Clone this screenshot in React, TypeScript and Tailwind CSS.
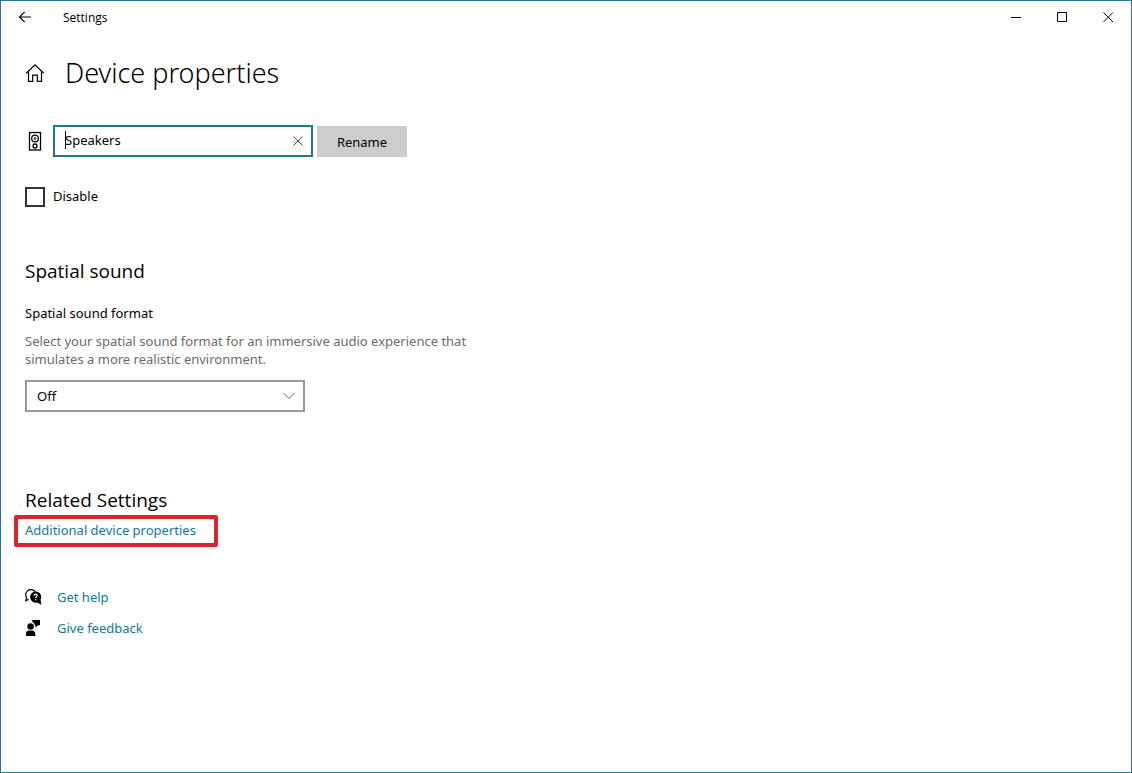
import { useState } from "react";

const windowButtons = [
  { key: "minimize", label: "Minimize", path: "M0 5.5h10" },
  { key: "maximize", label: "Maximize", path: "M0.5 0.5h9v9h-9z" },
  { key: "close", label: "Close", path: "M0.5 0.5l9.5 9.5M10 0.5L0.5 10" },
];

const helpLinks = [
  { key: "help", label: "Get help", icon: HelpIcon },
  { key: "feedback", label: "Give feedback", icon: FeedbackIcon },
];

function BackIcon() {
  return (
    <svg width="14" height="12" viewBox="0 0 14 12" fill="none" stroke="currentColor" strokeWidth="1.2">
      <path d="M1.5 6H13M6.7 0.8L1.5 6l5.2 5.2" />
    </svg>
  );
}

function HomeIcon() {
  return (
    <svg width="20" height="20" viewBox="0 0 20 20" fill="none" stroke="currentColor" strokeWidth="1.2">
      <path d="M1.3 10.3L10 1.8l8.7 8.5" />
      <path d="M3.5 8.5v9.9h4.2v-6.3h4.6v6.3h4.2V8.5" />
    </svg>
  );
}

function SpeakerIcon() {
  return (
    <svg width="20" height="20" viewBox="0 0 20 20" fill="none" stroke="currentColor">
      <rect x="4.5" y="1.5" width="11" height="17.5" strokeWidth="1.3" />
      <circle cx="10" cy="7.5" r="3.3" strokeWidth="1.2" />
      <circle cx="10" cy="7.5" r="1" strokeWidth="0.9" />
      <circle cx="10" cy="15" r="2" strokeWidth="1.3" />
    </svg>
  );
}

function HelpIcon() {
  return (
    <svg width="17" height="16" viewBox="0 0 17 16" fill="none">
      <path d="M3.6 10.4L0.8 11.8l0.9-2.9A4.900 4.900 0 1 1 10.400 2.800" stroke="black" strokeWidth="1.2" />
      <path d="M10.6 2.500a5.600 5.600 0 0 1 4.900 8.300l0.9 4.900-4.200-2.200A5.600 5.600 0 1 1 10.6 2.500z" fill="black" />
      <path d="M9 6.700c0-1 .7-1.6 1.600-1.600s1.6.6 1.6 1.500c0 1.100-1.500 1.200-1.500 2.500" stroke="white" strokeWidth="1.2" />
      <rect x="10.1" y="10" width="1.2" height="1.300" fill="white" />
    </svg>
  );
}

function FeedbackIcon() {
  return (
    <svg width="17" height="16" viewBox="0 0 17 16" fill="black">
      <circle cx="5.6" cy="6.4" r="3.2" />
      <path d="M1 16v-2.2c0-2 1.2-3.3 3.2-3.3h2.9c2 0 3.2 1.3 3.2 3.3V16z" />
      <path d="M7.3 0H15v5.2h-2L10.4 7.7V5.2H9.7C9.7 3.6 8.8 2.4 7.3 1.9z" />
    </svg>
  );
}

function TitleBar() {
  return (
    <header className="flex h-8 items-center">
      <button aria-label="Back" className="flex h-8 w-12 items-center justify-center">
        <BackIcon />
      </button>
      <span className="ml-3.5 pt-0.5 font-['Open_Sans',sans-serif] text-xs">Settings</span>
      <div className="ml-auto flex">
        {windowButtons.map((it) => (
          <button key={it.key} aria-label={it.label} className="flex h-8 w-[46px] items-center justify-center">
            <svg width="11" height="11" viewBox="0 0 11 11" fill="none" stroke="currentColor">
              <path d={it.path} />
            </svg>
          </button>
        ))}
      </div>
    </header>
  );
}

export default function App() {
  const [name, setName] = useState("Speakers");
  const [disabled, setDisabled] = useState(false);

  return (
    <div className="min-h-screen border border-[#2b7294] bg-white font-['Noto_Sans','Open_Sans',sans-serif] text-[13px] leading-[18px] text-black">
      <TitleBar />

      <main className="px-6 pt-[22px] pb-6">
        <div className="flex items-center gap-5">
          <a href="#home" aria-label="Home">
            <HomeIcon />
          </a>
          <h1 className="text-[27px] leading-9 font-light">Device properties</h1>
        </div>

        <form className="mt-[34px] flex items-center" onSubmit={(e) => e.preventDefault()}>
          <SpeakerIcon />
          <div className="relative ml-2 w-[260px]">
            <input
              type="text"
              aria-label="Device name"
              value={name}
              onChange={(e) => setName(e.target.value)}
              className="block h-8 w-full border-2 border-[#1d7a8c] pr-8 pb-0.5 pl-2.5 outline-none"
            />
            {/* caret */}
            <span className="absolute top-1.5 left-3 h-[18px] w-px bg-black" />
            <button
              type="button"
              aria-label="Clear"
              onClick={() => setName("")}
              className="absolute top-0 right-0 flex h-8 w-[30px] items-center justify-center text-[#444]"
            >
              <svg width="10" height="10" viewBox="0 0 10 10" fill="none" stroke="currentColor">
                <path d="M0.5 0.5l9 9M9.5 0.5l-9 9" />
              </svg>
            </button>
          </div>
          <button className="ml-1 h-[31px] w-[90px] self-end bg-[#cccccc]">Rename</button>
        </form>

        <label className="mt-[30px] flex h-5 w-fit gap-2">
          <input
            type="checkbox"
            checked={disabled}
            onChange={(e) => setDisabled(e.target.checked)}
            className="h-5 w-5 appearance-none border-2 border-[#333] checked:bg-[#1d7a8c]"
          />
          Disable
        </label>

        <section className="mt-[50px]">
          <h2 className="font-['Open_Sans',sans-serif] text-[19px] leading-7">Spatial sound</h2>
          <label htmlFor="spatial-format" className="mt-[19px] block">
            Spatial sound format
          </label>
          <p className="mt-2.5 max-w-[460px] text-[#6b6b6b]">
            Select your spatial sound format for an immersive audio experience that simulates a more realistic
            environment.
          </p>
          <div className="relative mt-3 w-[280px]">
            <select
              id="spatial-format"
              className="block h-8 w-full appearance-none border-2 border-[#999] bg-white pr-8 pl-2.5 outline-none"
            >
              <option>Off</option>
            </select>
            <svg
              width="12"
              height="8"
              viewBox="0 0 12 8"
              fill="none"
              stroke="#666"
              className="pointer-events-none absolute top-3 right-2.5"
            >
              <path d="M0.3 0.8L6 6.5l5.7-5.7" />
            </svg>
          </div>
        </section>

        <section className="mt-[74px]">
          <h2 className="font-['Open_Sans',sans-serif] text-[19px] leading-7">Related Settings</h2>
          <div className="relative mt-[7px] w-fit">
            <a href="#additional" className="block text-[#1177a0]">
              Additional device properties
            </a>
            {/* highlight around the link */}
            <span className="pointer-events-none absolute -top-1.5 -right-[22px] -bottom-2 -left-[11px] rounded-xs border-4 border-[#d9252d]" />
          </div>
        </section>

        <ul className="mt-[49px] space-y-[13px]">
          {helpLinks.map((it) => {
            const Icon = it.icon;
            return (
              <li key={it.key}>
                <a href={`#${it.key}`} className="flex w-fit items-center gap-[15px] text-[#1177a0]">
                  <Icon />
                  {it.label}
                </a>
              </li>
            );
          })}
        </ul>
      </main>
    </div>
  );
}
